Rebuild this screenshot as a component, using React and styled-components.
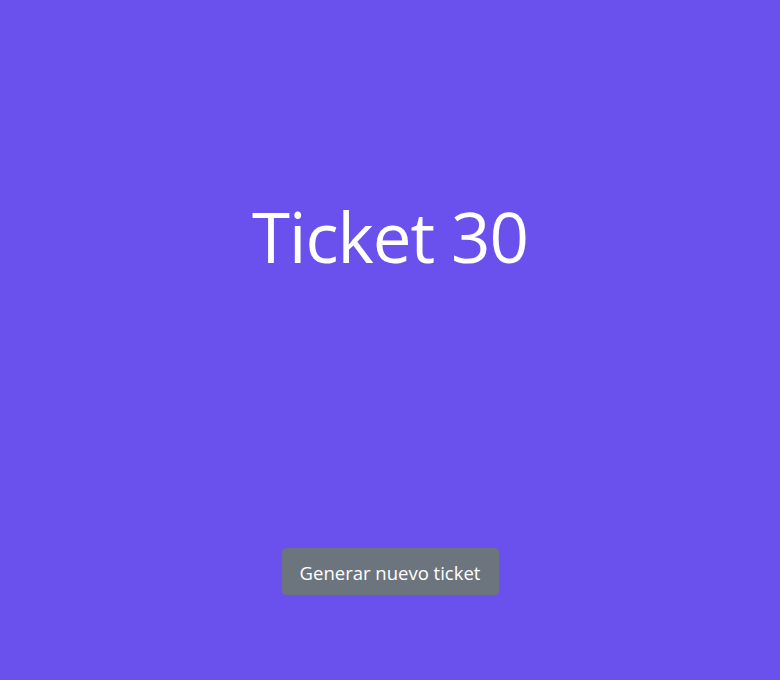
import React from "react";
import styled, { createGlobalStyle } from "styled-components";

const Global = createGlobalStyle`
  html, body { margin: 0; padding: 0; height: 100%; }
  body { background: #6a51ee; font-family: "Open Sans", "Noto Sans", sans-serif; }
  #root { height: 100%; }
`;

const Page = styled.main`
  height: 100vh;
  box-sizing: border-box;
  display: flex;
  flex-direction: column;
  align-items: center;
  padding-top: 195px;
`;

const Title = styled.h1`
  margin: 0;
  color: #ffffff;
  font-size: 69px;
  font-weight: 400;
  line-height: 1.2;
  letter-spacing: -1px;
`;

const Button = styled.button`
  margin-top: 270px;
  background: #6c757d;
  color: #ffffff;
  border: 1px solid #6c757d;
  border-radius: 4px;
  font-family: inherit;
  font-size: 18.5px;
  line-height: 1.5;
  padding: 10px 12px;
  width: 217px;
  height: 47px;
  white-space: nowrap;
  cursor: pointer;
`;

export default function App() {
  return (
    <>
      <Global />
      <Page>
        <Title>Ticket 30</Title>
        <Button>Generar nuevo ticket</Button>
      </Page>
    </>
  );
}
